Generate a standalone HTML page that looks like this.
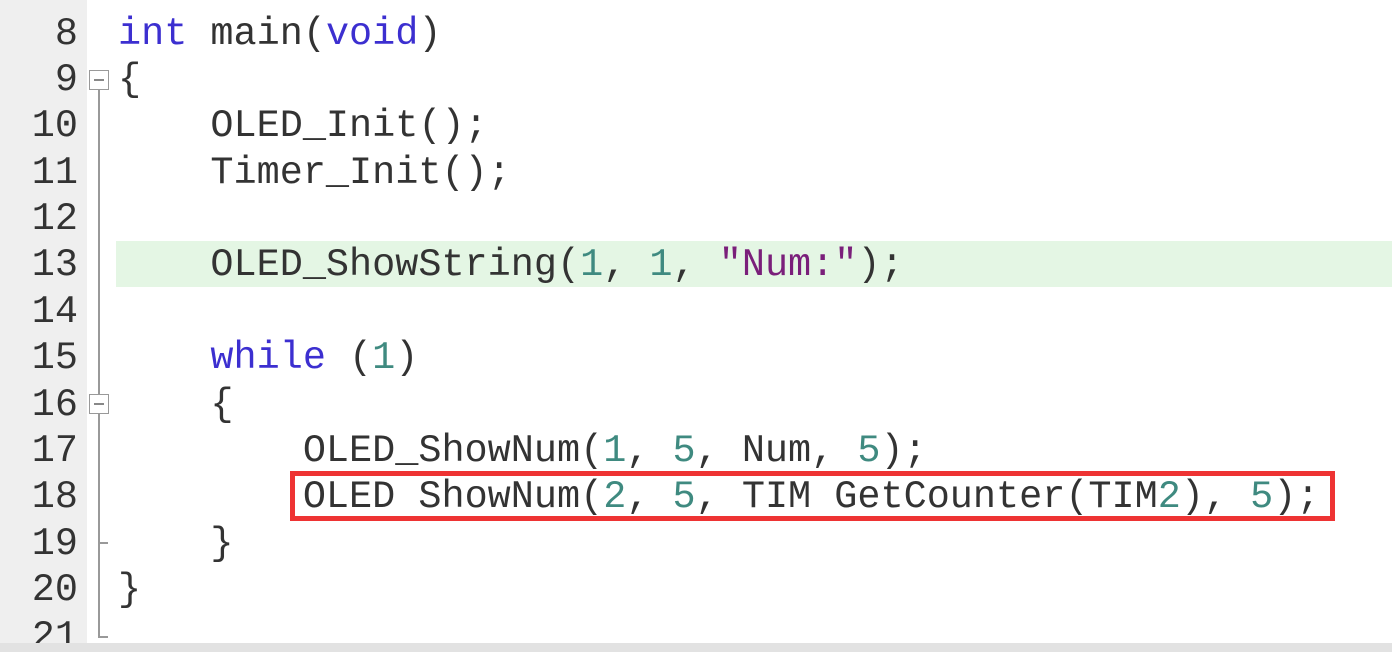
<!DOCTYPE html>
<html><head><meta charset="utf-8"><style>
html,body{margin:0;padding:0;width:1392px;height:652px;overflow:hidden;background:#fff;}
.g{position:absolute;left:0;top:0;width:87px;height:643px;background:#efefef;}
.hl{position:absolute;left:116px;top:241px;width:1276px;height:46px;background:#e4f6e4;}
.ln{position:absolute;left:0;width:78px;text-align:right;}
.c{position:absolute;left:118px;white-space:pre;}
.ln,.c{font-family:"Liberation Mono",monospace;font-size:38.5px;line-height:46px;color:#333;height:46px;margin-top:2px;}
.k{color:#3c2fd0}.n{color:#3f8a80}.s{color:#7a1f7a}
.u{color:transparent}
.fl{position:absolute;left:98px;width:2px;background:#999;}
.fb{position:absolute;left:89px;width:18px;height:18px;border:1.5px solid #999;background:#fff;}
.fb:after{content:"";position:absolute;left:4px;top:8px;width:10px;height:2px;background:#888;}
.box{position:absolute;left:290px;top:471px;width:1035px;height:40px;border:5px solid #ee3333;}
.sb{position:absolute;left:0;top:643px;width:1392px;height:9px;background:#e2e2e2;}
</style></head><body>
<div class="g"></div>
<div class="hl"></div>
<div class="fl" style="top:90px;height:305px"></div>
<div class="fl" style="top:413px;height:224px"></div>
<div class="fl" style="top:542px;height:2px;width:10px"></div>
<div class="fl" style="top:636px;height:2px;width:10px"></div>
<div class="fb" style="top:70px"></div>
<div class="fb" style="top:394px"></div>
<div class="ln" style="top:9px">8</div>
<div class="ln" style="top:55px">9</div>
<div class="ln" style="top:101px">10</div>
<div class="ln" style="top:148px">11</div>
<div class="ln" style="top:194px">12</div>
<div class="ln" style="top:240px">13</div>
<div class="ln" style="top:287px">14</div>
<div class="ln" style="top:333px">15</div>
<div class="ln" style="top:380px">16</div>
<div class="ln" style="top:426px">17</div>
<div class="ln" style="top:472px">18</div>
<div class="ln" style="top:519px">19</div>
<div class="ln" style="top:565px">20</div>
<div class="ln" style="top:612px">21</div>
<div class="c" style="top:9px"><span class="k">int</span> main(<span class="k">void</span>)</div>
<div class="c" style="top:55px">{</div>
<div class="c" style="top:101px">    OLED_Init();</div>
<div class="c" style="top:148px">    Timer_Init();</div>
<div class="c" style="top:240px">    OLED_ShowString(<span class="n">1</span>, <span class="n">1</span>, <span class="s">"Num:"</span>);</div>
<div class="c" style="top:333px">    <span class="k">while</span> (<span class="n">1</span>)</div>
<div class="c" style="top:380px">    {</div>
<div class="c" style="top:426px">        OLED_ShowNum(<span class="n">1</span>, <span class="n">5</span>, Num, <span class="n">5</span>);</div>
<div class="c" style="top:472px">        OLED<span class="u">_</span>ShowNum(<span class="n">2</span>, <span class="n">5</span>, TIM<span class="u">_</span>GetCounter(TIM<span class="n">2</span>), <span class="n">5</span>);</div>
<div class="c" style="top:519px">    }</div>
<div class="c" style="top:565px">}</div>
<div class="box"></div>
<div class="sb"></div>
</body></html>
